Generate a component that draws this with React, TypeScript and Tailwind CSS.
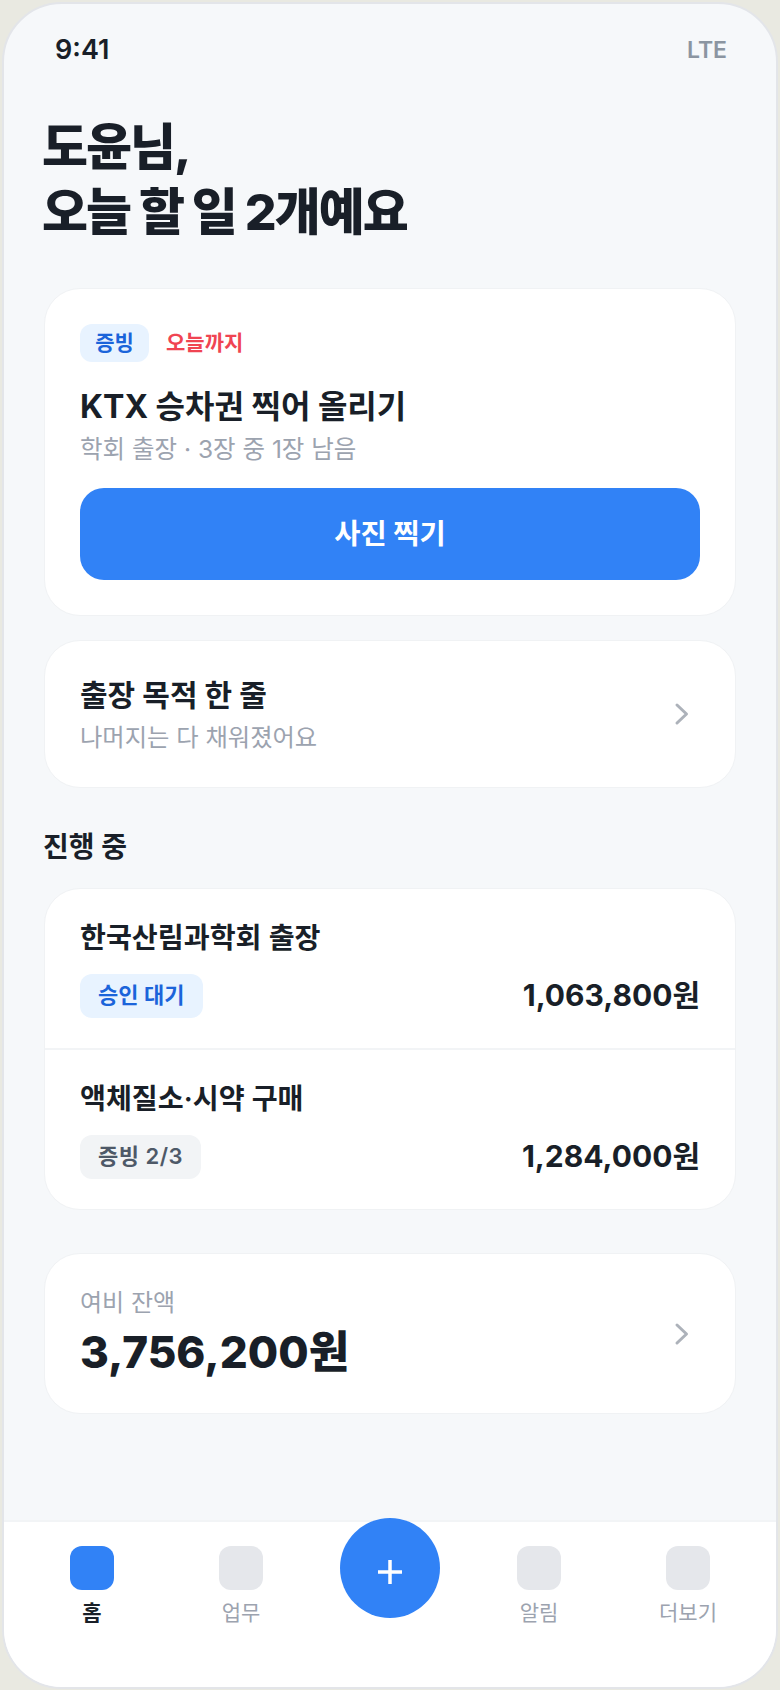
import React from "react";

const font = { fontFamily: "Inter, 'Noto Sans CJK KR', 'Noto Sans', sans-serif" };

function Chevron() {
  return (
    <svg width="16" height="24" viewBox="0 0 16 24" fill="none" className="shrink-0">
      <path d="M3 3l9.5 9L3 21" stroke="#adb2ba" strokeWidth="3" strokeLinecap="round" strokeLinejoin="round" />
    </svg>
  );
}

function NavItem({ label, active }: { label: string; active?: boolean }) {
  return (
    <div className="flex flex-col items-center gap-[10px]">
      <div className={`w-[44px] h-[44px] rounded-[12px] ${active ? "bg-[#3182f6]" : "bg-[#e5e7eb]"}`} />
      <div className={`text-[21px] leading-[26px] ${active ? "font-bold text-[#191f28]" : "text-[#9ca3af]"}`}>{label}</div>
    </div>
  );
}

function TripRow({ title, badge, amount, blue }: { title: string; badge: string; amount: string; blue?: boolean }) {
  return (
    <div className="px-[35px] pt-[30px] h-[159px]">
      <div className="text-[28.2px] leading-[38px] font-semibold text-[#191f28]">{title}</div>
      <div className="flex items-center justify-between mt-[16px]">
        <div className={`h-[44px] px-[18px] rounded-[12px] flex items-center text-[22px] font-semibold ${blue ? "bg-[#e8f3ff] text-[#1b64da]" : "bg-[#f2f4f6] text-[#4e5968] tracking-[0.5px]"}`}>{badge}</div>
        <div className="text-[30px] font-bold text-[#191f28]">{amount}</div>
      </div>
    </div>
  );
}

export default function App() {
  return (
    <div className="w-[780px] h-[1690px] bg-[#e9e9e1] overflow-hidden pt-[2px] pb-[1px] px-[2px]" style={font}>
      <div className="relative h-full rounded-[60px] bg-[#f6f8fa] border-2 border-[#e3e5e9] overflow-hidden flex flex-col">
        <div className="flex items-center justify-between pl-[51px] pr-[49px] h-[92px]">
          <span className="text-[27px] font-semibold text-[#191f28]">9:41</span>
          <span className="text-[23px] font-semibold text-[#8b95a1]">LTE</span>
        </div>

        <div className="flex-1 px-[40px]">
          <h1 className="mt-[19px] -ml-[2px] text-[50px] leading-[65px] font-extrabold tracking-[-2px] text-[#191f28]">
            도윤님,<br />오늘 할 일 2개예요
          </h1>

          <div className="mt-[43px] h-[328px] bg-white rounded-[36px] border border-[#f0f2f4] px-[35px] pt-[35px]">
            <div className="flex items-center gap-[17px]">
              <div className="h-[38px] w-[69px] rounded-[12px] bg-[#e8f3ff] text-[#1b64da] flex items-center justify-center text-[21px] font-semibold">증빙</div>
              <div className="text-[21px] font-semibold text-[#f04452]">오늘까지</div>
            </div>
            <div className="mt-[23px] text-[32px] leading-[44px] font-bold text-[#191f28]">KTX 승차권 찍어 올리기</div>
            <div className="mt-[4px] text-[24.5px] leading-[32px] text-[#9ca3af]">학회 출장 · 3장 중 1장 남음</div>
            <div className="mt-[23px] h-[92px] rounded-[24px] bg-[#3182f6] text-white flex items-center justify-center text-[28.5px] font-bold">사진 찍기</div>
          </div>

          <div className="mt-[24px] h-[148px] bg-white rounded-[36px] border border-[#f0f2f4] pl-[35px] pr-[45px] flex items-center justify-between">
            <div>
              <div className="text-[30px] leading-[40px] font-bold text-[#191f28]">출장 목적 한 줄</div>
              <div className="mt-[6px] text-[24.3px] leading-[32px] text-[#9ca3af]">나머지는 다 채워졌어요</div>
            </div>
            <Chevron />
          </div>

          <div className="mt-[41px] -ml-[1px] text-[28px] leading-[36px] font-bold text-[#191f28]">진행 중</div>

          <div className="mt-[23px] bg-white rounded-[36px] border border-[#f0f2f4] overflow-hidden">
            <TripRow title="한국산림과학회 출장" badge="승인 대기" amount="1,063,800원" blue />
            <div className="h-[2px] bg-[#f2f4f6]" />
            <TripRow title="액체질소·시약 구매" badge="증빙 2/3" amount="1,284,000원" />
          </div>

          <div className="mt-[43px] h-[161px] bg-white rounded-[36px] border border-[#f0f2f4] pl-[35px] pr-[45px] flex items-center justify-between">
            <div>
              <div className="text-[24px] leading-[32px] text-[#9ca3af]">여비 잔액</div>
              <div className="mt-[4px] text-[44px] leading-[58px] font-extrabold text-[#191f28]">3,756,200원</div>
            </div>
            <Chevron />
          </div>
        </div>

        <div className="h-[167px] bg-white border-t-2 border-[#f2f4f6] pl-[14px] pt-[24px] grid grid-cols-[148px_150px_148px_150px_148px] justify-items-center items-start">
          <NavItem label="홈" active />
          <NavItem label="업무" />
          <div className="-mt-[28px] w-[100px] h-[100px] rounded-full bg-[#3182f6] flex items-center justify-center">
            <svg width="24" height="24" viewBox="0 0 24 24" className="mt-[8px]">
              <path d="M12 0v24M0 12h24" stroke="#fff" strokeWidth="3.5" />
            </svg>
          </div>
          <NavItem label="알림" />
          <NavItem label="더보기" />
        </div>
      </div>
    </div>
  );
}
